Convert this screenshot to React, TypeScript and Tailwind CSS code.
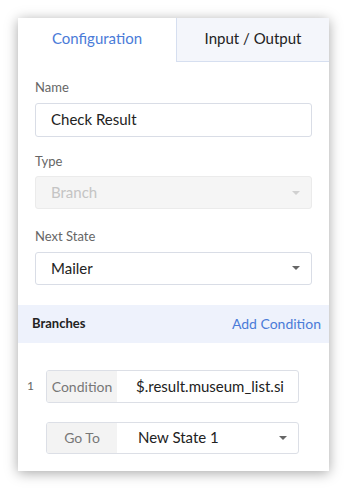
import React from 'react'

const font = { fontFamily: 'Lato, "Open Sans", sans-serif' }

function Caret({ className = '' }: { className?: string }) {
  return (
    <svg width="8" height="4" viewBox="0 0 8 4" className={className}>
      <path d="M0 0h8L4 4z" fill="currentColor" />
    </svg>
  )
}

export default function App() {
  return (
    <div className="w-[347px] h-[489px] bg-white pt-[18px] pl-[18px]" style={font}>
      <div className="w-[311px] h-[453px] bg-white shadow-[0_2px_12px_rgba(0,0,0,0.35)] flex flex-col">
        <div className="flex h-[44px]">
          <div className="w-[158px] flex items-center justify-center pb-[3px] text-[15px] text-[#4a7bd8]">
            Configuration
          </div>
          <div className="flex-1 flex items-center justify-center pb-[3px] text-[15px] text-[#222] bg-[#f4f6fb] border-l border-b border-[#d6dff0]">
            Input / Output
          </div>
        </div>

        <div className="px-[17px]">
          <div className="mt-[16px] text-[13px] text-[#666]">Name</div>
          <div className="mt-[5px] h-[34px] border border-[#d9dde6] rounded-[3px] flex items-center px-[15px] text-[15px] text-[#222]">
            Check Result
          </div>

          <div className="mt-[15px] text-[13px] text-[#666]">Type</div>
          <div className="mt-[5px] h-[33px] border border-[#ebebeb] bg-[#f5f5f5] rounded-[3px] flex items-center justify-between pl-[15px] pr-[11px] text-[15px] text-[#c4c4c4]">
            <span>Branch</span>
            <Caret className="text-[#d0d0d0]" />
          </div>

          <div className="mt-[18px] text-[13px] text-[#666]">Next State</div>
          <div className="mt-[5px] h-[33px] border border-[#d9dde6] rounded-[3px] flex items-center justify-between pl-[15px] pr-[11px] text-[15px] text-[#222]">
            <span>Mailer</span>
            <Caret className="text-[#666]" />
          </div>
        </div>

        <div className="mt-[20px] h-[38px] bg-[#eef2fc] flex items-center justify-between pl-[14px] pr-[8px]">
          <span className="text-[13px] font-bold text-[#222]">Branches</span>
          <span className="text-[14px] text-[#4a7bd8]">Add Condition</span>
        </div>

        <div className="mt-[27px] flex items-center pl-[9px]">
          <span className="w-[19px] text-[12px] text-[#666]">1</span>
          <div className="w-[253px] h-[33px] border border-[#dcdfe6] rounded-[3px] flex overflow-hidden">
            <div className="w-[70px] bg-[#f3f3f3] flex items-center justify-center text-[14px] text-[#777]">
              Condition
            </div>
            <div className="flex-1 flex items-center pl-[19px] text-[15px] text-[#222] whitespace-nowrap overflow-hidden">
              $.result.museum_list.si
            </div>
          </div>
        </div>

        <div className="mt-[19px] flex items-center pl-[28px]">
          <div className="w-[253px] h-[32px] border border-[#dcdfe6] rounded-[3px] flex overflow-hidden">
            <div className="w-[70px] bg-[#f3f3f3] flex items-center justify-center text-[14px] text-[#777]">
              Go To
            </div>
            <div className="flex-1 flex items-center justify-between pl-[21px] pr-[11px] text-[15px] text-[#222]">
              <span>New State 1</span>
              <Caret className="text-[#666]" />
            </div>
          </div>
        </div>
      </div>
    </div>
  )
}
